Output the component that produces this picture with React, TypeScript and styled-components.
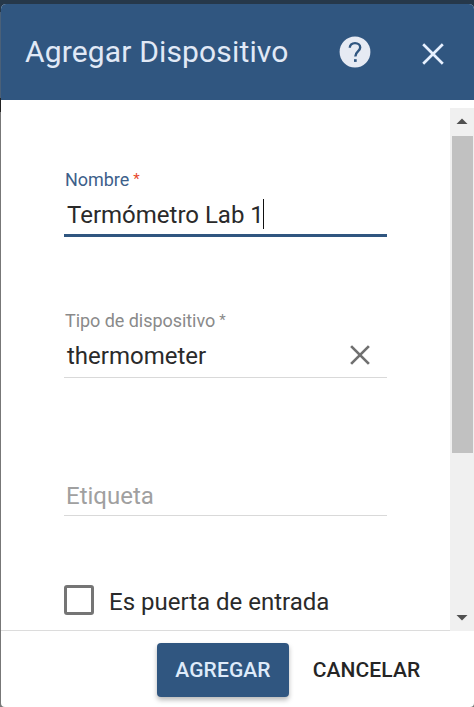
import React from "react";
import styled, { createGlobalStyle } from "styled-components";

const GlobalStyle = createGlobalStyle`
  * { box-sizing: border-box; }
  body { margin: 0; background: #26384a; font-family: Roboto, sans-serif; overflow: hidden; }
`;

const Backdrop = styled.div`
  width: 474px;
  height: 707px;
  padding: 4px 0 0 1px;
  background: linear-gradient(#26384a 0 12px, #4a6078 12px 98px, #222 98px 112px, #777 112px);
`;

const Dialog = styled.section`
  display: flex;
  flex-direction: column;
  height: 703px;
  overflow: hidden;
  border-radius: 5px 5px 4px 4px;
  background: #fff;
`;

const Header = styled.header`
  display: flex;
  align-items: center;
  flex: 0 0 96px;
  padding: 0 30px 0 24px;
  background: #305680;
  color: #e1e9f6;
`;

const Title = styled.h1`
  flex: 1;
  margin: 0;
  font-size: 30px;
  font-weight: 400;
  line-height: 96px;
  white-space: nowrap;
  letter-spacing: 0.15px;
`;

const HeaderIcon = styled.svg<{ $gap?: number; $drop?: number }>`
  display: block;
  flex: none;
  margin: ${(p) => p.$drop ?? 0}px 0 0 ${(p) => p.$gap ?? 0}px;
`;

const Content = styled.main`
  display: flex;
  flex: 0 0 523px;
  margin-top: 8px;
`;

const Form = styled.form`
  flex: 1;
  padding: 60px 63px 0;
  border-bottom: 1px solid #dcdcdc;
`;

const Field = styled.div<{ $focused?: boolean; $height: number; $gap: number }>`
  display: flex;
  flex-direction: column;
  height: ${(p) => p.$height}px;
  margin-bottom: ${(p) => p.$gap}px;
  border-bottom: ${(p) => (p.$focused ? "3px solid #305680" : "1px solid #d9d9d9")};
`;

const Label = styled.label<{ $focused?: boolean }>`
  height: 24px;
  padding-left: 1px;
  font-size: 18px;
  line-height: 24px;
  letter-spacing: -0.05px;
  white-space: pre;
  color: ${(p) => (p.$focused ? "#3d608a" : "#8a8a8a")};
`;

const Required = styled.span<{ $error?: boolean }>`
  margin-left: 4px;
  font-size: 15px;
  vertical-align: 2px;
  line-height: 1;
  color: ${(p) => (p.$error ? "#e8482c" : "inherit")};
`;

const Value = styled.div<{ $muted?: boolean; $drop: number }>`
  display: flex;
  align-items: center;
  height: 46px;
  padding-left: ${(p) => (p.$muted ? 2 : 3)}px;
  font-size: 24px;
  white-space: nowrap;
  color: ${(p) => (p.$muted ? "#a0a0a0" : "#2a2a2a")};

  > span:first-child {
    padding-top: ${(p) => p.$drop * 2}px;
  }
`;

const Caret = styled.span`
  width: 1px;
  height: 30px;
  margin: 2px 0 0 -1px;
  background: #111;
`;

const ClearIcon = styled.svg`
  display: block;
  margin: 0 17px 0 auto;
`;

const CheckRow = styled.label`
  display: flex;
  align-items: center;
  gap: 15px;
  height: 30px;
  font-size: 24px;
  color: #2a2a2a;
  white-space: nowrap;
`;

const Box = styled.span`
  width: 30px;
  height: 30px;
  border: 3px solid #757575;
  border-radius: 3px;
`;

const CheckText = styled.span`
  padding-top: 3px;
`;

const Scrollbar = styled.div`
  display: flex;
  flex: 0 0 24px;
  flex-direction: column;
  align-items: center;
  justify-content: space-between;
  background: #f0f0f0;
`;

const Thumb = styled.div`
  width: 21px;
  height: 317px;
  margin: 0 0 auto 1px;
  background: #c1c1c1;
`;

const Arrow = styled.svg`
  display: block;
  flex: 0 0 28px;
`;

const Actions = styled.footer`
  display: flex;
  align-items: flex-start;
  gap: 6px;
  padding: 12px 0 0 156px;
`;

const Button = styled.button<{ $primary?: boolean }>`
  width: ${(p) => (p.$primary ? 132 : 143)}px;
  height: 54px;
  padding: 0;
  border: 0;
  border-radius: 4px;
  font-family: inherit;
  font-size: 21px;
  font-weight: 500;
  letter-spacing: 0.1px;
  white-space: nowrap;
  background: ${(p) => (p.$primary ? "#305680" : "transparent")};
  color: ${(p) => (p.$primary ? "#dfebfa" : "#252525")};
  box-shadow: ${(p) => (p.$primary ? "0 3px 5px rgba(0,0,0,.28)" : "none")};
`;

export default function App() {
  return (
    <Backdrop>
      <GlobalStyle />
      <Dialog>
        <Header>
          <Title>Agregar Dispositivo</Title>
          <HeaderIcon width="32" height="32" viewBox="0 0 32 32">
            <circle cx="16" cy="16" r="15.4" fill="#e6eaf3" />
            <path d="M10.8 11.8C10.8 8.9 12.9 7.1 16 7.1S21.2 8.9 21.2 11.6C21.2 15.3 16.3 15.7 16.3 20.4" fill="none" stroke="#305680" strokeWidth="2.4" />
            <rect x="15" y="23.2" width="2.7" height="2.7" fill="#305680" />
          </HeaderIcon>
          <HeaderIcon $gap={51} $drop={4} width="22" height="22" viewBox="0 0 22 22" fill="none" stroke="#e6f0ff" strokeWidth="2.7">
            <path d="M1.2 1.2 20.8 20.8M20.8 1.2 1.2 20.8" />
          </HeaderIcon>
        </Header>
        <Content>
          <Form>
            <Field $focused $height={69} $gap={72}>
              <Label $focused>Nombre<Required $error>*</Required></Label>
              <Value $drop={2}><span>Termómetro Lab 1</span><Caret /></Value>
            </Field>
            <Field $height={69} $gap={69}>
              <Label>Tipo de dispositivo<Required>*</Required></Label>
              <Value $drop={1}>
                <span>thermometer</span>
                <ClearIcon width="20" height="20" viewBox="0 0 20 20" fill="none" stroke="#707070" strokeWidth="2.7">
                  <path d="M1.1 1.1 18.9 18.9M18.9 1.1 1.1 18.9" />
                </ClearIcon>
              </Value>
            </Field>
            <Field $height={69} $gap={69}>
              <Label />
              <Value $muted $drop={3}><span>Etiqueta</span></Value>
            </Field>
            <CheckRow>
              <Box />
              <CheckText>Es puerta de entrada</CheckText>
            </CheckRow>
          </Form>
          <Scrollbar>
            <Arrow width="24" height="28" viewBox="0 0 24 28"><path d="M6.5 16 12 10.5 17.5 16Z" fill="#505050" /></Arrow>
            <Thumb />
            <Arrow width="24" height="28" viewBox="0 0 24 28"><path d="M6.5 12 12 17.5 17.5 12Z" fill="#505050" /></Arrow>
          </Scrollbar>
        </Content>
        <Actions>
          <Button $primary>AGREGAR</Button>
          <Button>CANCELAR</Button>
        </Actions>
      </Dialog>
    </Backdrop>
  );
}
